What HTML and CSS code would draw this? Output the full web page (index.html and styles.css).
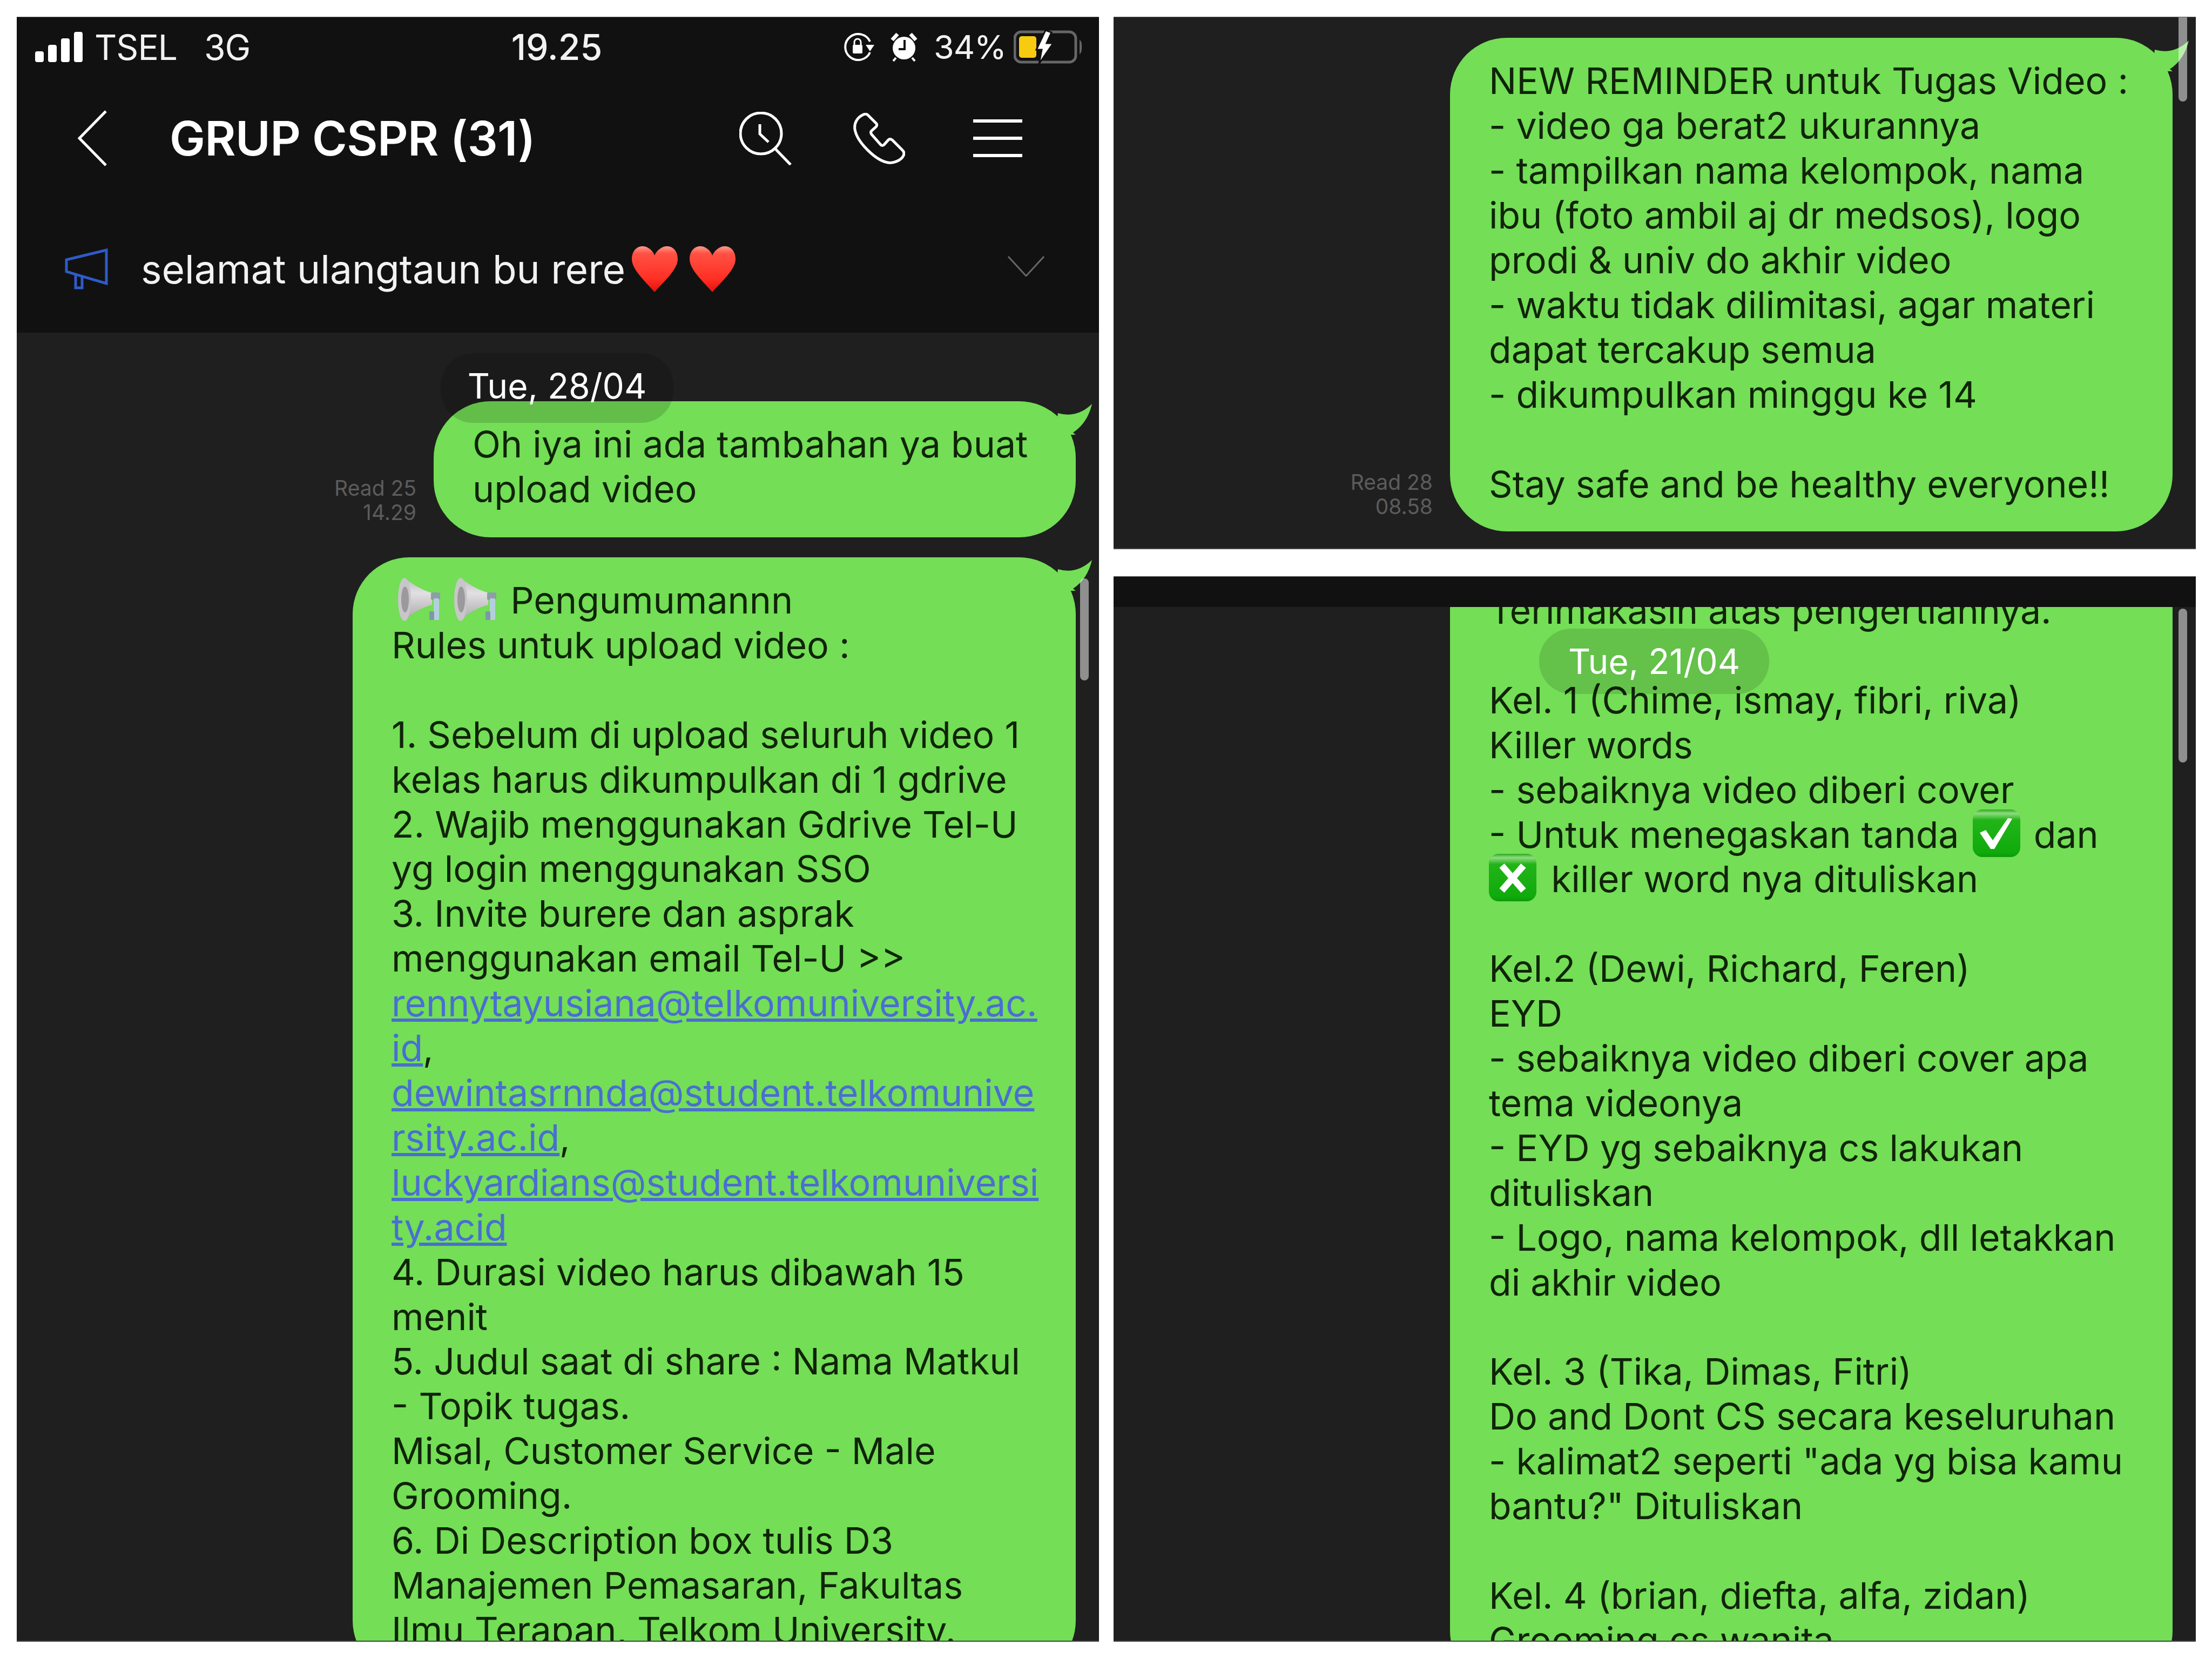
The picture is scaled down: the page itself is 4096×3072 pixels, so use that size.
FILE: index.html
```html
<!DOCTYPE html>
<html lang="en">
<head>
  <meta charset="UTF-8">
  <title>GRUP CSPR</title>
  <link rel="stylesheet" href="styles.css">
</head>
<body>

  <svg class="defs" width="0" height="0">
    <defs>
      <linearGradient id="heartFill" x1="0" y1="0" x2="0" y2="1">
        <stop offset="0" stop-color="#ff9a8e"/>
        <stop offset="0.16" stop-color="#ff5144"/>
        <stop offset="0.7" stop-color="#ff3024"/>
        <stop offset="1" stop-color="#e3120c"/>
      </linearGradient>
      <linearGradient id="boxFill" x1="0" y1="0" x2="0" y2="1">
        <stop offset="0" stop-color="#2aa71f"/>
        <stop offset="0.08" stop-color="#8fdc7f"/>
        <stop offset="0.22" stop-color="#22b418"/>
        <stop offset="0.9" stop-color="#10aa0c"/>
        <stop offset="1" stop-color="#0d9a0a"/>
      </linearGradient>
      <linearGradient id="hornFill" x1="0" y1="0" x2="0" y2="1">
        <stop offset="0" stop-color="#bdbabd"/>
        <stop offset="0.35" stop-color="#e2e0e2"/>
        <stop offset="1" stop-color="#a9a6a9"/>
      </linearGradient>
      <symbol id="heart" viewBox="0 0 85 85">
        <path d="M42 17C38 6 28 0 20 0 8 0 0 10 0 24 0 44 28 68 42 85 56 68 85 44 85 24 85 10 77 0 65 0 57 0 47 6 42 17Z" fill="url(#heartFill)"/>
      </symbol>
      <symbol id="horn" viewBox="0 0 80 80">
        <path d="M12 0C22 8 38 20 63 28V50C40 56 22 68 12 80Z" fill="url(#hornFill)"/>
        <ellipse cx="12" cy="40" rx="12" ry="40" fill="#c9c6c9"/>
        <ellipse cx="13" cy="40" rx="7" ry="24" fill="#9c999c"/>
        <rect x="61" y="27" width="17" height="14" rx="3" fill="#8d9ea8"/>
        <rect x="66" y="38" width="10" height="40" rx="2" fill="#b4cfdc"/>
        <rect x="58" y="62" width="9" height="16" rx="2" fill="#7f96a8"/>
      </symbol>
      <symbol id="tail" viewBox="0 0 70 60">
        <path d="M5 20Q40 30 68 3 60 38 33 56L38 60 0 60Z" fill="#73de56"/>
      </symbol>
    </defs>
  </svg>

  <div class="sheet">

    <section class="panel panel-full">
      <div class="status-bar">
        <div class="status-left">
          <svg class="signal" viewBox="0 0 88 56">
            <rect x="0" y="36" width="16" height="20" rx="4"/>
            <rect x="24" y="24" width="16" height="32" rx="4"/>
            <rect x="48" y="12" width="16" height="44" rx="4"/>
            <rect x="72" y="0" width="16" height="56" rx="4"/>
          </svg>
          <span class="carrier">TSEL</span>
          <span class="network">3G</span>
        </div>
        <div class="clock">19.25</div>
        <div class="status-right">
          <svg class="lock-icon" viewBox="0 0 58 52">
            <path d="M50 16A24 24 0 1 0 50 36" fill="none" stroke="#fff" stroke-width="4"/>
            <path d="M42 22h16l-8 12Z" fill="#fff"/>
            <rect x="18" y="22" width="18" height="16" rx="2" fill="#fff"/>
            <path d="M21 22v-5a6 6 0 0 1 12 0v5" fill="none" stroke="#fff" stroke-width="3"/>
          </svg>
          <svg class="alarm-icon" viewBox="0 0 50 54">
            <circle cx="25" cy="29" r="21" fill="#fff"/>
            <path d="M3 14 13 3M47 14 37 3" stroke="#fff" stroke-width="7" fill="none"/>
            <path d="M10 47 5 53M40 47 45 53" stroke="#fff" stroke-width="4" fill="none"/>
            <path d="M26 14v17H15" stroke="#111" stroke-width="4" fill="none"/>
          </svg>
          <span class="battery-pct">34%</span>
          <svg class="battery" viewBox="0 0 128 62">
            <rect x="2" y="3" width="113" height="56" rx="12" fill="none" stroke="#666" stroke-width="5"/>
            <path d="M123 20c3 3 3 18 0 22z" fill="#666" stroke="#666" stroke-width="2"/>
            <rect x="10" y="11" width="32" height="40" rx="5" fill="#f7cb10"/>
            <path d="M59 0 42 36H52L47 62 73 24H61L70 4Z" fill="#fff" stroke="#111" stroke-width="3"/>
          </svg>
        </div>
      </div>

      <header class="chat-header">
        <svg class="back-icon" viewBox="0 0 54 104">
          <path d="M52 2 3 52 52 102" fill="none" stroke="#fff" stroke-width="5"/>
        </svg>
        <h1 class="chat-title">GRUP CSPR (31)</h1>
        <svg class="search-icon" viewBox="0 0 97 99">
          <circle cx="40" cy="40" r="38" fill="none" stroke="#fff" stroke-width="5"/>
          <path d="M67 69 95 98" stroke="#fff" stroke-width="5" fill="none"/>
          <path d="M38 23V41L54 56" stroke="#fff" stroke-width="5" fill="none"/>
        </svg>
        <svg class="call-icon" viewBox="0 0 96 95">
          <path d="M19 3C8 8 1 18 3 31 7 54 41 88 64 92c10 2 25-4 29-13 2-4 1-7-2-10L72 50c-3-2-5-2-7 0L57 59c-2 2-5 2-7-1L34 40c-2-3-2-5 0-7l8-7c2-2 2-4 1-6L27 4c-2-2-5-2-8-1Z" fill="none" stroke="#fff" stroke-width="5"/>
        </svg>
        <div class="menu-icon"><i></i><i></i><i></i></div>
      </header>

      <div class="notice">
        <svg class="notice-icon" viewBox="0 0 80 76">
          <path d="M77 3V65L3 43V21ZM20 48V73H32V52" fill="none" stroke="#2e5bc9" stroke-width="5"/>
        </svg>
        <span class="notice-text">selamat ulangtaun bu rere</span>
        <svg class="heart"><use href="#heart"/></svg>
        <svg class="heart"><use href="#heart"/></svg>
        <svg class="notice-arrow" viewBox="0 0 68 38">
          <path d="M1 1 34 37 67 1" fill="none" stroke="#666" stroke-width="3"/>
        </svg>
      </div>

      <div class="chat">
        <div class="msg-row">
          <div class="read">Read 25<br>14.29</div>
          <div class="bubble bubble-short">
            <svg class="tail"><use href="#tail"/></svg>
            Oh iya ini ada tambahan ya buat<br>
            upload video
          </div>
        </div>
        <div class="msg-row">
          <div class="bubble bubble-wide">
            <svg class="tail"><use href="#tail"/></svg>
            <svg class="horn horn-first"><use href="#horn"/></svg> <svg class="horn"><use href="#horn"/></svg> Pengumumannn<br>
            Rules untuk upload video :<br>
            <br>
            1. Sebelum di upload seluruh video 1<br>
            kelas harus dikumpulkan di 1 gdrive<br>
            2. Wajib menggunakan Gdrive Tel-U<br>
            yg login menggunakan SSO<br>
            3. Invite burere dan asprak<br>
            menggunakan email Tel-U &gt;&gt;<br>
            <a class="link">rennytayusiana@telkomuniversity.ac.</a><br>
            <a class="link">id</a>,<br>
            <a class="link">dewintasrnnda@student.telkomunive</a><br>
            <a class="link">rsity.ac.id</a>,<br>
            <a class="link">luckyardians@student.telkomuniversi</a><br>
            <a class="link">ty.acid</a><br>
            4. Durasi video harus dibawah 15<br>
            menit<br>
            5. Judul saat di share : Nama Matkul<br>
            - Topik tugas.<br>
            Misal, Customer Service - Male<br>
            Grooming.<br>
            6. Di Description box tulis D3<br>
            Manajemen Pemasaran, Fakultas<br>
            Ilmu Terapan, Telkom University.
          </div>
        </div>
        <div class="date-pill date-pill-left">Tue, 28/04</div>
        <div class="scroll-thumb scroll-left"></div>
      </div>
    </section>

    <div class="stack">
      <section class="panel panel-top">
        <div class="chat chat-reminder">
          <div class="msg-row">
            <div class="read">Read 28<br>08.58</div>
            <div class="bubble bubble-reminder">
              <svg class="tail"><use href="#tail"/></svg>
              NEW REMINDER untuk Tugas Video :<br>
              - video ga berat2 ukurannya<br>
              - tampilkan nama kelompok, nama<br>
              ibu (foto ambil aj dr medsos), logo<br>
              prodi &amp; univ do akhir video<br>
              - waktu tidak dilimitasi, agar materi<br>
              dapat tercakup semua<br>
              - dikumpulkan minggu ke 14<br>
              <br>
              Stay safe and be healthy everyone!!
            </div>
          </div>
          <div class="scroll-thumb scroll-top"></div>
        </div>
      </section>

      <section class="panel panel-bottom">
        <div class="strip"></div>
        <div class="chat chat-feedback">
          <div class="msg-row">
            <div class="bubble bubble-feedback">
              Terimakasih atas pengertiannya.<br>
              <br>
              Kel. 1 (Chime, ismay, fibri, riva)<br>
              Killer words<br>
              - sebaiknya video diberi cover<br>
              - Untuk menegaskan tanda
              <svg class="mark" viewBox="0 0 88 88">
                <rect width="88" height="88" rx="18" fill="url(#boxFill)"/>
                <path d="M13 43 24 38 37 57 65 16 73 17 40 73 33 73Z" fill="#fff"/>
              </svg>
              dan<br>
              <svg class="mark mark-first" viewBox="0 0 88 88">
                <rect width="88" height="88" rx="18" fill="url(#boxFill)"/>
                <path d="M24 22 64 68M64 22 24 68" stroke="#fff" stroke-width="12" fill="none"/>
              </svg>
              killer word nya dituliskan<br>
              <br>
              Kel.2 (Dewi, Richard, Feren)<br>
              EYD<br>
              - sebaiknya video diberi cover apa<br>
              tema videonya<br>
              - EYD yg sebaiknya cs lakukan<br>
              dituliskan<br>
              - Logo, nama kelompok, dll letakkan<br>
              di akhir video<br>
              <br>
              Kel. 3 (Tika, Dimas, Fitri)<br>
              Do and Dont CS secara keseluruhan<br>
              - kalimat2 seperti "ada yg bisa kamu<br>
              bantu?" Dituliskan<br>
              <br>
              Kel. 4 (brian, diefta, alfa, zidan)<br>
              Grooming cs wanita
            </div>
          </div>
          <div class="date-pill date-pill-right">Tue, 21/04</div>
          <div class="scroll-thumb scroll-bottom"></div>
        </div>
      </section>
    </div>

  </div>

</body>
</html>
```

FILE: styles.css
```css
body { margin: 0; background: #fff; font-family: Inter, "Liberation Sans", sans-serif; }
.defs { position: absolute; }
.sheet { display: flex; gap: 27px; padding: 31px 30px 32px 31px; width: 4096px; height: 3072px; box-sizing: border-box; }
.stack { display: flex; flex-direction: column; gap: 50px; }

.panel {
  width: 2004px;
  box-sizing: border-box;
  background: #1f1f1f;
  border-top: 1px solid #5a5a5a;
  border-bottom: 2px solid #454545;
  overflow: hidden;
  display: flex;
  flex-direction: column;
}
.panel-full { height: 3009px; }
.panel-top { height: 986px; }
.panel-bottom { height: 1973px; }
.strip { height: 56px; background: #111; flex: none; }

/* status bar */
.status-bar {
  height: 110px;
  background: #111;
  color: #f2f2f2;
  display: grid;
  grid-template-columns: 1fr auto 1fr;
  align-items: center;
  padding: 0 30px 0 34px;
  font-size: 64px;
}
.status-left { display: flex; align-items: center; }
.signal { width: 88px; height: 56px; fill: #fff; margin-right: 22px; }
.carrier { letter-spacing: -1px; }
.network { margin-left: 50px; letter-spacing: -1px; }
.clock { font-size: 66px; font-weight: 500; margin-right: 8px; }
.status-right { display: flex; align-items: center; justify-content: flex-end; }
.lock-icon { width: 58px; height: 52px; margin-right: 30px; }
.alarm-icon { width: 50px; height: 54px; margin-right: 30px; }
.battery-pct { font-size: 61px; margin-right: 14px; letter-spacing: -1px; }
.battery { width: 128px; height: 62px; }

/* header */
.chat-header {
  height: 228px;
  background: #111;
  display: flex;
  align-items: center;
  padding-left: 113px;
}
.back-icon { width: 54px; height: 104px; margin-right: 116px; }
.chat-title { margin: 0; color: #fff; font-size: 88px; font-weight: 600; letter-spacing: -0.6px; width: 1055px; white-space: nowrap; }
.search-icon { width: 97px; height: 99px; margin-right: 114px; }
.call-icon { width: 96px; height: 95px; margin-right: 126px; }
.menu-icon { width: 91px; display: flex; flex-direction: column; gap: 26px; }
.menu-icon i { display: block; height: 6px; background: #fff; }

/* pinned notice */
.notice {
  height: 246px;
  box-sizing: border-box;
  padding: 10px 0 0 89px;
  background: #111;
  display: flex;
  align-items: center;
  color: #f2f2f2;
  font-size: 73px;
}
.notice-icon { width: 80px; height: 76px; margin-right: 61px; }
.notice-text { margin-right: 12px; white-space: nowrap; }
.heart { width: 85px; height: 85px; margin-right: 22px; }
.notice-arrow { width: 68px; height: 38px; margin-left: 482px; margin-top: -10px; }

/* messages */
.chat { position: relative; flex: 1; padding: 127px 43px 0 0; overflow: hidden; }
.chat-reminder { padding-top: 38px; }
.chat-feedback { padding-top: 0; }
.msg-row { display: flex; justify-content: flex-end; align-items: flex-end; gap: 32px; margin-bottom: 37px; }
.read { color: #5c5c5c; font-size: 39px; line-height: 45px; text-align: right; margin-bottom: 24px; }
.bubble {
  position: relative;
  box-sizing: border-box;
  background: #73de56;
  color: #102408;
  border-radius: 105px;
  font-size: 68px;
  line-height: 82.9px;
  white-space: nowrap;
  padding: 38px 0 46px 72px;
}
.bubble-short { width: 1189px; height: 252px; }
.bubble-wide { width: 1339px; }
.bubble-reminder { width: 1338px; height: 914px; line-height: 83px; }
.bubble-feedback { width: 1338px; margin-top: -100px; padding-top: 65px; }
.tail { position: absolute; right: -32px; top: 2px; width: 70px; height: 60px; }
.link { color: #4a6ed2; text-decoration: underline; }
/* negative margins keep the emoji from stretching the line */
.horn { width: 80px; height: 80px; vertical-align: 6px; margin: -20px 5px -20px 5px; }
.horn-first { margin-left: 12px; margin-right: 0; }
.mark { width: 88px; height: 88px; vertical-align: 3px; margin: -20px 6px; }
.mark-first { margin-left: 0; margin-right: 8px; }

/* date chip sits over the bubbles */
.date-pill {
  position: absolute;
  display: flex;
  align-items: center;
  justify-content: center;
  background: rgba(0, 0, 0, 0.14);
  color: #fff;
  font-size: 64px;
  border-radius: 60px;
  box-sizing: border-box;
  padding-bottom: 8px;
}
.date-pill-left { left: 785px; top: 38px; width: 431px; height: 129px; }
.date-pill-right { left: 788px; top: 40px; width: 426px; height: 121px; background: rgba(0, 0, 0, 0.13); padding-bottom: 0; }

.scroll-thumb { position: absolute; width: 16px; background: rgba(255, 255, 255, 0.5); border-radius: 8px; }
.scroll-left { right: 19px; top: 455px; height: 189px; }
.scroll-top { right: 16px; top: -10px; height: 166px; }
.scroll-bottom { right: 16px; top: 3px; height: 285px; }
```
